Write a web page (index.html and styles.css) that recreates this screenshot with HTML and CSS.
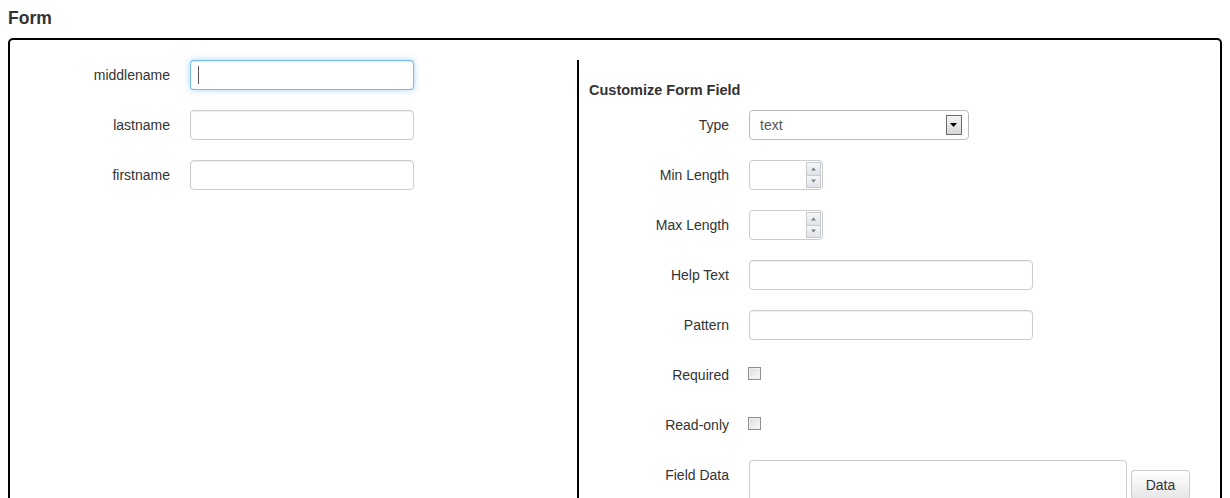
FILE: index.html
```html
<!DOCTYPE html>
<html>
<head>
<meta charset="utf-8">
<link rel="stylesheet" href="styles.css">
</head>
<body>
<h4 class="title">Form</h4>
<div class="box">
  <div class="left">
    <div class="row">
      <label class="lbl">middlename</label>
      <div class="input focus"><span class="caret"></span></div>
    </div>
    <div class="row">
      <label class="lbl">lastname</label>
      <div class="input"></div>
    </div>
    <div class="row">
      <label class="lbl">firstname</label>
      <div class="input"></div>
    </div>
  </div>
  <div class="right">
    <div class="head">Customize Form Field</div>
    <div class="row r">
      <label class="lbl">Type</label>
      <div class="select"><span>text</span><span class="arrow"><svg width="8" height="5" viewBox="0 0 8 5"><path d="M0 0h7L3.5 4z" fill="#000"/></svg></span></div>
    </div>
    <div class="row r">
      <label class="lbl">Min Length</label>
      <div class="spin"><span class="btns"><span class="b"><svg width="6" height="4" viewBox="0 0 6 4"><path d="M0 3.5h5L2.5 0.5z" fill="#7a7f8a"/></svg></span><span class="b"><svg width="6" height="4" viewBox="0 0 6 4"><path d="M0 0.5h5L2.5 3.5z" fill="#7a7f8a"/></svg></span></span></div>
    </div>
    <div class="row r">
      <label class="lbl">Max Length</label>
      <div class="spin"><span class="btns"><span class="b"><svg width="6" height="4" viewBox="0 0 6 4"><path d="M0 3.5h5L2.5 0.5z" fill="#7a7f8a"/></svg></span><span class="b"><svg width="6" height="4" viewBox="0 0 6 4"><path d="M0 0.5h5L2.5 3.5z" fill="#7a7f8a"/></svg></span></span></div>
    </div>
    <div class="row r">
      <label class="lbl">Help Text</label>
      <div class="input wide"></div>
    </div>
    <div class="row r">
      <label class="lbl">Pattern</label>
      <div class="input wide"></div>
    </div>
    <div class="row r">
      <label class="lbl">Required</label>
      <div class="check"></div>
    </div>
    <div class="row r">
      <label class="lbl">Read-only</label>
      <div class="check"></div>
    </div>
    <div class="row r top">
      <label class="lbl">Field Data</label>
      <div class="ta"></div>
      <div class="btn">Data</div>
    </div>
  </div>
</div>
</body>
</html>
```
FILE: styles.css
```css
html, body { margin: 0; padding: 0; background: #fff; }
body {
  margin: 8px;
  font-family: "Liberation Sans", Arial, sans-serif;
  font-size: 14px;
  color: #333;
  overflow: hidden;
}
.title {
  margin: 0 0 10px 0;
  font-size: 17.5px;
  line-height: 20px;
  font-weight: bold;
  color: #333;
}
.box {
  border: 2px solid #000;
  border-radius: 5px;
  height: 520px;
  display: grid;
  grid-template-columns: 567px 1fr;
  padding-top: 20px;
  box-sizing: border-box;
}
.right {
  border-left: 2px solid #000;
  padding-left: 10px;
}
.row {
  display: grid;
  grid-template-columns: 160px 224px;
  column-gap: 20px;
  align-items: center;
  height: 30px;
  margin-bottom: 20px;
}
.row.r {
  grid-template-columns: 140px auto auto;
  justify-content: start;
}
.lbl {
  text-align: right;
  line-height: 20px;
  color: #333;
}
.input {
  height: 30px;
  box-sizing: border-box;
  border: 1px solid #ccc;
  border-radius: 4px;
  box-shadow: inset 0 1px 1px rgba(0,0,0,0.075);
  background: #fff;
  position: relative;
}
.input.focus {
  border-color: rgba(82,168,236,0.8);
  box-shadow: inset 0 1px 1px rgba(0,0,0,0.075), 0 0 6px rgba(82,168,236,0.5);
}
.caret {
  position: absolute;
  left: 7px;
  top: 5px;
  width: 1px;
  height: 18px;
  background: #555;
}
.input.wide { width: 284px; }
.head {
  font-weight: bold;
  font-size: 14.5px;
  line-height: 20px;
  height: 50px;
  padding-top: 20px;
  box-sizing: border-box;
  color: #333;
}
.select {
  width: 220px;
  height: 30px;
  box-sizing: border-box;
  border: 1px solid #bbb;
  border-radius: 4px;
  display: flex;
  align-items: center;
  justify-content: space-between;
  padding: 0 6px 0 10px;
  color: #555;
  background: #fff;
}
.arrow {
  width: 14px;
  height: 18px;
  border: 1px solid #6b6b6b;
  background: linear-gradient(#f4f4f4, #d8d8d8);
  display: flex;
  align-items: center;
  justify-content: center;
  box-sizing: content-box;
}
.spin {
  width: 74px;
  height: 30px;
  box-sizing: border-box;
  border: 1px solid #ccc;
  border-radius: 4px;
  display: flex;
  justify-content: flex-end;
  align-items: center;
  padding-right: 1px;
  background: #fff;
}
.btns {
  display: flex;
  flex-direction: column;
  width: 15px;
  height: 26px;
}
.b {
  flex: 1;
  border: 1px solid #c7cbd2;
  background: linear-gradient(#f6f7f9, #dfe2e7);
  display: flex;
  align-items: center;
  justify-content: center;
}
.b + .b { border-top: none; }
.check {
  width: 13px;
  height: 13px;
  box-sizing: border-box;
  border: 1px solid #8f8f8f;
  background: linear-gradient(135deg, #dcdcdc, #fafafa);
  box-shadow: inset 0 0 0 1px #f0f0f0;
  margin-top: -4px;
  margin-left: -1px;
}
.row.top { align-items: start; }
.row.top .lbl { padding-top: 5px; }
.ta {
  width: 378px;
  height: 60px;
  box-sizing: border-box;
  border: 1px solid #ccc;
  border-radius: 4px;
  background: #fff;
}
.row.top .btn { margin-left: -16px; margin-top: 10px; }
.btn {
  width: 59px;
  height: 30px;
  box-sizing: border-box;
  border: 1px solid #ccc;
  border-bottom-color: #b3b3b3;
  border-radius: 4px;
  background: linear-gradient(#fff, #e6e6e6);
  display: flex;
  align-items: center;
  justify-content: center;
  color: #333;
  line-height: 20px;
}
```
